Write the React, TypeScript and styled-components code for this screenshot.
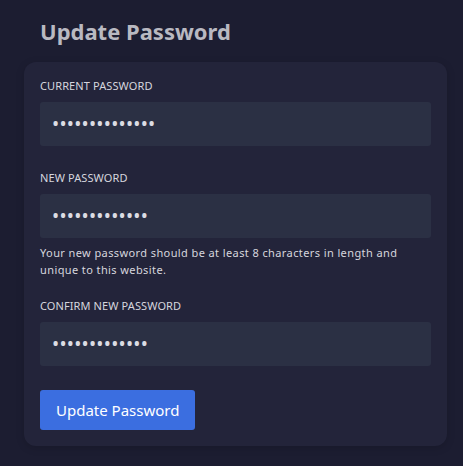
import React from "react";
import styled, { createGlobalStyle } from "styled-components";

const Global = createGlobalStyle`
  html, body { margin: 0; padding: 0; background: #1c1d31; }
  body { font-family: "Noto Sans", "Open Sans", sans-serif; }
  * { box-sizing: border-box; }
`;

const Page = styled.div`
  width: 463px;
  height: 466px;
  padding: 14px 16px 20px 24px;
  background: #1c1d31;
`;

const Title = styled.h1`
  margin: 0 0 14px 16px;
  font-size: 22px;
  font-weight: 700;
  line-height: 34px;
  color: #b9b9c1;
`;

const Card = styled.form`
  width: 423px;
  background: #23243a;
  border-radius: 12px;
  padding: 16px;
  display: flex;
  flex-direction: column;
  box-shadow: 0 2px 8px rgba(0, 0, 0, 0.15);
`;

const Field = styled.div<{ $gap?: number }>`
  display: flex;
  flex-direction: column;
  margin-bottom: ${(p) => p.$gap ?? 24}px;
`;

const Label = styled.label`
  font-size: 11px;
  line-height: 16px;
  color: #d6d6de;
  text-transform: uppercase;
  margin-bottom: 8px;
  letter-spacing: 0.1px;
`;

const Input = styled.input`
  height: 44px;
  width: 391px;
  border: none;
  outline: none;
  border-radius: 3px;
  background: #2b3044;
  color: #dcdce3;
  font-family: "Noto Sans", sans-serif;
  font-size: 19px;
  padding: 0 12px;
  letter-spacing: 0.25px;
`;

const Hint = styled.p`
  margin: 6px 0 0 0;
  font-size: 11px;
  line-height: 17px;
  color: #d6d6de;
  letter-spacing: 0.4px;
`;

const Button = styled.button`
  align-self: flex-start;
  height: 40px;
  padding: 0 16px;
  border: none;
  border-radius: 3px;
  background: #3b6ee0;
  color: #ffffff;
  font-family: "Noto Sans", sans-serif;
  font-size: 15px;
  cursor: pointer;
`;

export default function App() {
  return (
    <>
      <Global />
      <Page>
        <Title>Update Password</Title>
        <Card onSubmit={(e) => e.preventDefault()}>
          <Field $gap={24}>
            <Label>Current Password</Label>
            <Input type="password" defaultValue="currentpasswd1" readOnly />
          </Field>
          <Field $gap={20}>
            <Label>New Password</Label>
            <Input type="password" defaultValue="newpassword12" readOnly />
            <Hint>
              Your new password should be at least 8 characters in length and
              unique to this website.
            </Hint>
          </Field>
          <Field $gap={24}>
            <Label>Confirm New Password</Label>
            <Input type="password" defaultValue="newpassword12" readOnly />
          </Field>
          <Button type="submit">Update Password</Button>
        </Card>
      </Page>
    </>
  );
}
